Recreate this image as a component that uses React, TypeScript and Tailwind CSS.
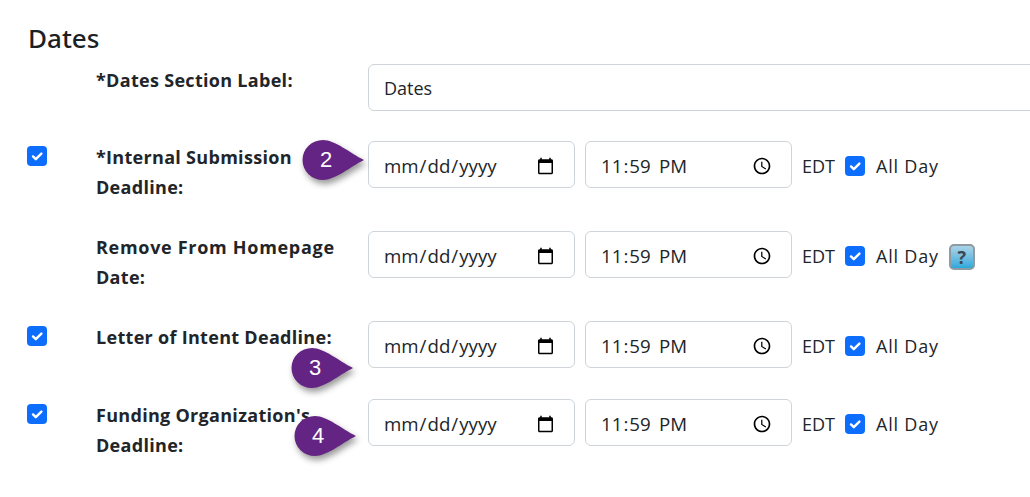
import React from 'react';

// Purple callout marker that sits over the form
function Marker({ n, className }: { n: number; className: string }) {
  return (
    <div className={`absolute w-[62px] h-[40px] ${className}`}>
      <svg
        width="62"
        height="40"
        viewBox="0 0 62 40"
        className="overflow-visible drop-shadow-[2px_4px_3px_rgba(0,0,0,0.4)]"
      >
        <path d="M21 0C33 0 48 13 62 20C48 27 33 40 21 40A20.500 20 0 0 1 21 0Z" fill="#642483" />
      </svg>
      <span className="absolute left-[14px] top-[6px] w-[20px] text-center text-[22px] leading-[28px] text-white font-['Liberation_Sans',sans-serif]">
        {n}
      </span>
    </div>
  );
}

function Check({ className = '' }: { className?: string }) {
  return (
    <span className={`flex w-5 h-5 shrink-0 items-center justify-center rounded-[4px] bg-[#0d6efd] ${className}`}>
      <svg width="16" height="16" viewBox="0 0 20 20">
        <path d="M5 10.500l3.500 3.500l7-7" fill="none" stroke="#fff" strokeWidth="3" strokeLinecap="round" strokeLinejoin="round" />
      </svg>
    </span>
  );
}

function HelpIcon() {
  return (
    <span className="ml-[10px] mt-[4px] flex w-[26px] h-[26px] items-center justify-center rounded-[5px] border-2 border-[#8f9ba3] bg-gradient-to-b from-[#a9d3e6] to-[#27a9dc]">
      <span className="text-[18px] font-bold leading-none text-[#3c4650]">?</span>
    </span>
  );
}

function DateRow({ help }: { help?: boolean }) {
  return (
    <div className="flex items-center">
      <input
        type="date"
        className="w-[207px] h-[47px] shrink-0 rounded-md border border-[#ced4da] bg-white pl-[14px] pr-[17px] pt-[3px] text-[18.7px] text-[#212529] outline-none"
      />
      <input
        type="time"
        defaultValue="23:59"
        className="ml-[10px] w-[207px] h-[47px] shrink-0 rounded-md border border-[#ced4da] bg-white pl-[14px] pr-[16px] pt-[3px] text-[18.7px] text-[#212529] outline-none [&::-webkit-datetime-edit-ampm-field]:ml-[4px]"
      />
      <span className="ml-[10px] mt-[4px]">EDT</span>
      <Check className="ml-[10px] mt-[3px]" />
      <span className="ml-[11px] mt-[4px] tracking-[0.8px]">All Day</span>
      {help && <HelpIcon />}
    </div>
  );
}

interface RowProps {
  checked?: boolean;
  label: React.ReactNode;
  help?: boolean;
  className: string;
}

function Row({ checked, label, help, className }: RowProps) {
  return (
    <div className={`flex items-start ${className}`}>
      <div className="w-[68px] shrink-0 pt-[5px]">{checked && <Check className="-ml-px" />}</div>
      <div className="w-[272px] shrink-0 pt-px font-bold leading-[30px] tracking-[0.3px]">{label}</div>
      <DateRow help={help} />
    </div>
  );
}

export default function App() {
  return (
    <div className="relative w-[1030px] h-[497px] overflow-hidden bg-white pl-[28px] text-[18px] text-[#212529] font-['Open_Sans','Noto_Sans',sans-serif]">
      <h2 className="pt-[20px] text-[26px] font-medium leading-[36px] text-[#1c1f23] font-['Noto_Sans',sans-serif]">Dates</h2>

      <div className="mt-[8px] flex items-start">
        <div className="w-[68px] shrink-0" />
        <label className="w-[272px] shrink-0 pt-px font-bold leading-[30px] tracking-[0.3px]">*Dates Section Label:</label>
        <input
          type="text"
          defaultValue="Dates"
          className="h-[47px] w-[700px] shrink-0 rounded-md border border-[#ced4da] bg-white px-[15px] outline-none"
        />
      </div>

      <Row checked className="mt-[30px]" label={<>*Internal Submission<br />Deadline:</>} />
      <Row
        className="mt-[29px]"
        help
        label={<><span className="tracking-[0.7px]">Remove From Homepage</span><br />Date:</>}
      />
      <Row checked className="mt-[29px]" label="Letter of Intent Deadline:" />
      <Row checked className="mt-[31px]" label={<>Funding Organization's<br />Deadline:</>} />

      <Marker n={2} className="left-[302px] top-[140px]" />
      <Marker n={3} className="left-[291px] top-[348px]" />
      <Marker n={4} className="left-[294px] top-[416px]" />
    </div>
  );
}
